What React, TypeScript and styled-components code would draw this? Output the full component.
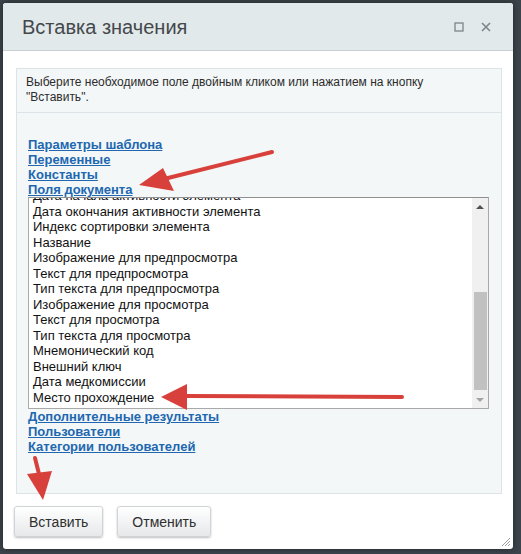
import React from "react";
import styled, {createGlobalStyle} from "styled-components";

const GlobalStyle = createGlobalStyle`
    html, body {
        margin: 0;
        padding: 0;
        background: #3c444b;
        font-family: "Liberation Sans", Arial, sans-serif;
    }
`;

const Page = styled.div`
    position: relative;
    width: 521px;
    height: 554px;
    overflow: hidden;
    padding: 3px 0 0 3px;
    box-sizing: border-box;
`;

const Dialog = styled.div`
    position: relative;
    width: 510px;
    height: 546px;
    background: #fff;
    border-radius: 3px;
    box-shadow: 0 0 6px rgba(0, 0, 0, .45);
    display: flex;
    flex-direction: column;
    overflow: hidden;
`;

const Header = styled.div`
    height: 48px;
    flex-shrink: 0;
    background: #e2e9ea;
    border-bottom: 1px solid #c9d0d3;
    display: flex;
    align-items: center;
    padding: 0 22px 0 19px;
    box-sizing: border-box;
`;

const Title = styled.div`
    flex: 1;
    font-size: 20px;
    color: #44484c;
    padding-top: 1px;
`;

const HeaderIcons = styled.div`
    display: flex;
    gap: 17px;
    align-items: center;
`;

const Body = styled.div`
    flex: 1;
    display: flex;
    flex-direction: column;
    padding: 17px 11px 12px 13px;
`;

const Panel = styled.div`
    height: 426px;
    background: #f4f7f8;
    border: 1px solid #dde4e7;
    box-sizing: border-box;
    display: flex;
    flex-direction: column;
`;

const Info = styled.div`
    font-size: 12px;
    line-height: 15px;
    color: #2c2c2c;
    padding: 6px 10px 7px 9px;
    border-bottom: 1px solid #dde4e7;
`;

const Tree = styled.div`
    padding: 24px 12px 0 11px;
    display: flex;
    flex-direction: column;
`;

const SectionLink = styled.a`
    font-size: 13px;
    line-height: 15px;
    font-weight: bold;
    color: #2067b0;
    text-decoration: underline;
    cursor: pointer;
    align-self: flex-start;
`;

const ListBox = styled.div`
    height: 212px;
    border: 1px solid #a9a9a9;
    border-top-color: #8f8f8f;
    background: #fff;
    display: flex;
    box-sizing: border-box;
`;

const ListView = styled.div`
    flex: 1;
    overflow: hidden;
`;

const ListItems = styled.ul`
    list-style: none;
    margin: -10px 0 0 0;
    padding: 0 0 0 4px;
`;

const ListItem = styled.li`
    font-size: 13px;
    line-height: 15.5px;
    color: #111;
    white-space: nowrap;
`;

const ScrollTrack = styled.div`
    width: 16px;
    background: #f0f0f0;
    display: flex;
    flex-direction: column;
    align-items: center;
`;

const ScrollArrow = styled.div<{ $down?: boolean }>`
    height: 17px;
    width: 100%;
    display: flex;
    align-items: center;
    justify-content: center;

    &::before {
        content: "";
        border-left: 4px solid transparent;
        border-right: 4px solid transparent;
        ${p => p.$down
            ? "border-top: 4px solid #a3a3a3;"
            : "border-bottom: 4px solid #505050;"}
    }
`;

const ScrollSpace = styled.div`
    flex: 1;
    width: 100%;
    display: flex;
    flex-direction: column;
    justify-content: flex-end;
    align-items: center;
    padding-bottom: 1px;
`;

const ScrollThumb = styled.div`
    width: 13px;
    height: 98px;
    background: #c1c1c1;
`;

const Footer = styled.div`
    display: flex;
    gap: 14px;
    margin-top: 12px;
    margin-left: -2px;
`;

const Button = styled.button`
    height: 31px;
    padding: 0 14px;
    font-family: "Liberation Sans", Arial, sans-serif;
    font-size: 14px;
    color: #2f2f2f;
    background: linear-gradient(#ffffff, #e6e8ea);
    border: 1px solid #d0d4d7;
    border-radius: 3px;
    box-shadow: 0 1px 2px rgba(0, 0, 0, .25);
    cursor: pointer;
`;

const Grip = styled.svg`
    position: absolute;
    right: 2px;
    bottom: 2px;
`;

const Annotations = styled.svg`
    position: absolute;
    left: 0;
    top: 0;
    pointer-events: none;
`;

const TOP_LINKS = ["Параметры шаблона", "Переменные", "Константы", "Поля документа"];
const BOTTOM_LINKS = ["Дополнительные результаты", "Пользователи", "Категории пользователей"];
const FIELDS = [
    "Дата начала активности элемента",
    "Дата окончания активности элемента",
    "Индекс сортировки элемента",
    "Название",
    "Изображение для предпросмотра",
    "Текст для предпросмотра",
    "Тип текста для предпросмотра",
    "Изображение для просмотра",
    "Текст для просмотра",
    "Тип текста для просмотра",
    "Мнемонический код",
    "Внешний ключ",
    "Дата медкомиссии",
    "Место прохождение",
];

const RED = "#d8413b";

export default function App() {
    return (
        <Page>
            <GlobalStyle/>
            <Dialog>
                <Header>
                    <Title>Вставка значения</Title>
                    <HeaderIcons>
                        <svg width="10" height="10" viewBox="0 0 10 10">
                            <rect x="1" y="1" width="8" height="8" fill="none" stroke="#7d848b" strokeWidth="1.3"/>
                        </svg>
                        <svg width="10" height="10" viewBox="0 0 10 10">
                            <path d="M1 1 L9 9 M9 1 L1 9" stroke="#7d848b" strokeWidth="1.6"/>
                        </svg>
                    </HeaderIcons>
                </Header>
                <Body>
                    <Panel>
                        <Info>
                            Выберите необходимое поле двойным кликом или нажатием на кнопку<br/>
                            "Вставить".
                        </Info>
                        <Tree>
                            {TOP_LINKS.map(l => <SectionLink key={l}>{l}</SectionLink>)}
                            <ListBox>
                                <ListView>
                                    <ListItems>
                                        {FIELDS.map(f => <ListItem key={f}>{f}</ListItem>)}
                                    </ListItems>
                                </ListView>
                                <ScrollTrack>
                                    <ScrollArrow/>
                                    <ScrollSpace>
                                        <ScrollThumb/>
                                    </ScrollSpace>
                                    <ScrollArrow $down/>
                                </ScrollTrack>
                            </ListBox>
                            {BOTTOM_LINKS.map(l => <SectionLink key={l}>{l}</SectionLink>)}
                        </Tree>
                    </Panel>
                    <Footer>
                        <Button>Вставить</Button>
                        <Button>Отменить</Button>
                    </Footer>
                </Body>
                <Grip width="10" height="10" viewBox="0 0 10 10">
                    <path d="M9 1 L1 9 M9 4 L4 9 M9 7 L7 9" stroke="#9aa0a5" strokeWidth="1"/>
                </Grip>
            </Dialog>
            <Annotations width="521" height="554" viewBox="0 0 521 554">
                <line x1="272" y1="152" x2="168" y2="178" stroke={RED} strokeWidth="4" strokeLinecap="round"/>
                <polygon points="139,185 163,168 174,191" fill={RED}/>
                <line x1="402" y1="397" x2="185" y2="396" stroke={RED} strokeWidth="4" strokeLinecap="round"/>
                <polygon points="161,397 187,384 187,410" fill={RED}/>
                <line x1="35" y1="458" x2="40" y2="478" stroke={RED} strokeWidth="4" strokeLinecap="round"/>
                <polygon points="43,500 27,474 52,471" fill={RED}/>
            </Annotations>
        </Page>
    );
}
